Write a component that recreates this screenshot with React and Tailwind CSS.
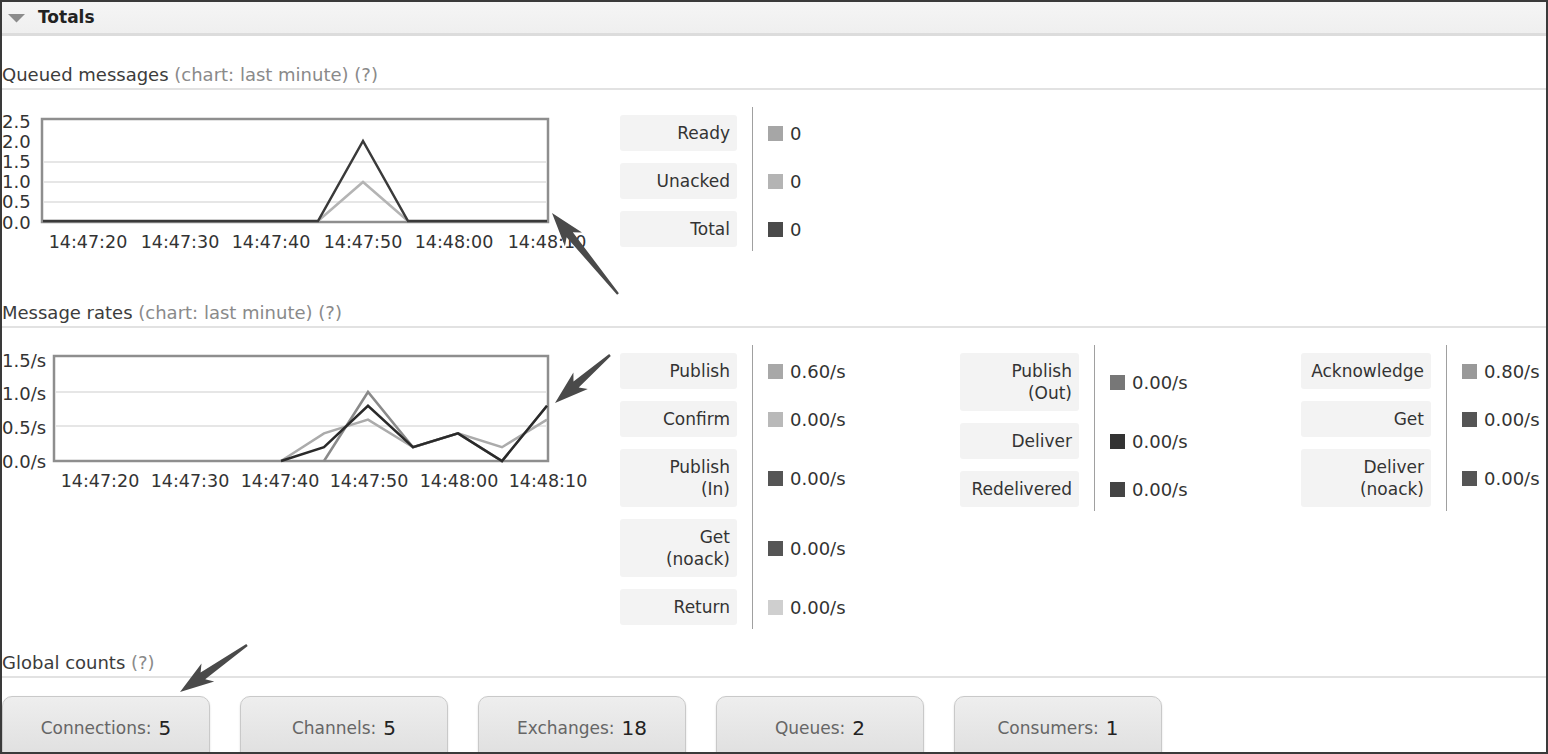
import React from "react";

const FONT = "DejaVu Sans, Verdana, sans-serif";

function arrowPoints(tx, ty, ax, ay) {
  const dx = ax - tx, dy = ay - ty;
  const L = Math.hypot(dx, dy);
  const ux = dx / L, uy = dy / L;
  const px = -uy, py = ux;
  const pt = (d, w) => `${(tx + ux * d + px * w).toFixed(1)},${(ty + uy * d + py * w).toFixed(1)}`;
  return [pt(0, 0), pt(34, 11), pt(28, 4), pt(L, 1.2), pt(L, -1.2), pt(28, -4), pt(34, -11)].join(" ");
}

function Title({ main, sub, className }) {
  return (
    <div className={`pb-[1px] border-b-2 border-[#e2e2e2] text-[18px] leading-[24px] whitespace-nowrap ${className}`}>
      <span className="text-[#3c3c3c]">{main}</span>
      {sub ? <span className="text-[#8a8a8a]"> {sub}</span> : null}
    </div>
  );
}

function LegendRow({ label, color, value }) {
  const lines = Array.isArray(label) ? label : [label];
  return (
    <>
      <div className="pt-[8px] pb-[4px] pr-[15px]">
        <div className="bg-[#f3f3f3] rounded-[3px] px-[7px] py-[7px] leading-[22px] text-right text-[17px] text-[#333]">
          {lines.map((l, i) => (
            <div key={i}>{l}</div>
          ))}
        </div>
      </div>
      <div className="border-l border-[#a0a0a0] pl-[15px] pt-[9px] pb-[4px] flex items-center whitespace-nowrap">
        <span className="inline-block w-[15px] h-[15px]" style={{ backgroundColor: color }} />
        <span className="ml-[7px] text-[18px] leading-[22px] text-[#333]">{value}</span>
      </div>
    </>
  );
}

function Chart1() {
  const ticks = [
    ["14:47:20", 88],
    ["14:47:30", 180],
    ["14:47:40", 271],
    ["14:47:50", 363],
    ["14:48:00", 454],
    ["14:48:10", 547],
  ];
  const ylabels = [
    ["2.5", 123],
    ["2.0", 143],
    ["1.5", 163],
    ["1.0", 183],
    ["0.5", 203],
    ["0.0", 224],
  ];
  return (
    <svg width="600" height="211" viewBox="2 91 600 211" className="shrink-0" style={{ fontFamily: FONT }}>
      <rect x="42" y="120" width="506" height="103" fill="#fff" stroke="#8e8e8e" strokeWidth="2.5" />
      {[163, 183, 203].map((y) => (
        <line key={y} x1="44" x2="546" y1={y} y2={y} stroke="#e6e6e6" strokeWidth="2" />
      ))}
      <polyline points="318,222 363,183 408,222" fill="none" stroke="#b4b4b4" strokeWidth="2.5" />
      <polyline points="43,222 318,222 363,142 408,222 547,222" fill="none" stroke="#3a3a3a" strokeWidth="2.5" strokeLinejoin="miter" />
      {ylabels.map(([t, y]) => (
        <text key={t} x="2" y={y + 6} fontSize="18" fill="#333">{t}</text>
      ))}
      {ticks.map(([t, x]) => (
        <text key={t} x={x} y="249" fontSize="17.5" fill="#333" textAnchor="middle">{t}</text>
      ))}
    </svg>
  );
}

function Chart2() {
  const xs = [281, 324, 368, 413, 458, 502, 547];
  const y = (v) => 462 - v * 69;
  const pts = (vals, from = 0) =>
    vals.map((v, i) => [v, i]).filter(([, i]) => i >= from).map(([v, i]) => `${xs[i]},${y(v).toFixed(1)}`).join(" ");
  const ticks = [
    ["14:47:20", 100],
    ["14:47:30", 190],
    ["14:47:40", 280],
    ["14:47:50", 369],
    ["14:48:00", 459],
    ["14:48:10", 548],
  ];
  const ylabels = [
    ["1.5/s", 362],
    ["1.0/s", 395],
    ["0.5/s", 429],
    ["0.0/s", 463],
  ];
  return (
    <svg width="600" height="323" viewBox="2 329 600 323" className="shrink-0" style={{ fontFamily: FONT }}>
      <rect x="54" y="357" width="494" height="105" fill="#fff" stroke="#8e8e8e" strokeWidth="2.5" />
      {[393, 427].map((yy) => (
        <line key={yy} x1="56" x2="546" y1={yy} y2={yy} stroke="#e6e6e6" strokeWidth="2" />
      ))}
      <polyline points={pts([0, 0.4, 0.6, 0.2, 0.4, 0.2, 0.6])} fill="none" stroke="#ababab" strokeWidth="2.5" />
      <polyline points={pts([0, 0, 1.0, 0.2, 0.4, 0, 0.8], 1)} fill="none" stroke="#8a8a8a" strokeWidth="2.5" />
      <polyline points={pts([0, 0.2, 0.8, 0.2, 0.4, 0, 0.8])} fill="none" stroke="#2a2a2a" strokeWidth="2.5" />
      {ylabels.map(([t, yy]) => (
        <text key={t} x="2" y={yy + 6} fontSize="18" fill="#333">{t}</text>
      ))}
      {ticks.map(([t, x]) => (
        <text key={t} x={x} y="488" fontSize="17.5" fill="#333" textAnchor="middle">{t}</text>
      ))}
    </svg>
  );
}

function CountButton({ label, value }) {
  return (
    <div className="w-[208px] h-[72px] shrink-0 rounded-[10px] border border-[#c9c9c9] bg-gradient-to-b from-[#eeeeee] to-[#dddddd] shadow-[0_1px_2px_rgba(0,0,0,0.15)] flex justify-center pt-[19px] whitespace-nowrap">
      <span className="text-[17px] leading-[24px] text-[#666]">{label}</span>
      <span className="ml-[7px] text-[20px] leading-[24px] text-[#222]">{value}</span>
    </div>
  );
}

export default function App() {
  return (
    <div
      className="relative w-[1548px] h-[754px] overflow-hidden bg-white border-2 border-[#3a3a3a] font-['DejaVu_Sans',Verdana,sans-serif] text-[#333]"
    >
      {/* Header */}
      <div className="h-[34px] bg-gradient-to-b from-[#f5f5f5] to-[#efefef] border-b-[3px] border-[#dcdcdc] flex items-center pl-[6px] pt-[1px]">
        <svg width="17" height="9" viewBox="0 0 17 9">
          <polygon points="0,0 17,0 8.5,8.5" fill="#8c8c8c" />
        </svg>
        <span className="ml-[13px] text-[17px] font-bold text-[#222]">Totals</span>
      </div>

      {/* Queued messages */}
      <Title main="Queued messages" sub="(chart: last minute) (?)" className="mt-[27px]" />
      <div className="flex items-start h-[211px]">
        <Chart1 />
        <div className="ml-[18px] mt-[17px] grid grid-cols-[132px_208px]">
          <LegendRow label="Ready" color="#a6a6a6" value="0" />
          <LegendRow label="Unacked" color="#b4b4b4" value="0" />
          <LegendRow label="Total" color="#4a4a4a" value="0" />
        </div>
      </div>

      {/* Message rates */}
      <Title main="Message rates" sub="(chart: last minute) (?)" />
      <div className="flex items-start h-[323px]">
        <Chart2 />
        <div className="ml-[18px] mt-[17px] flex items-start">
          <div className="grid grid-cols-[132px_208px]">
            <LegendRow label="Publish" color="#a8a8a8" value="0.60/s" />
            <LegendRow label="Confirm" color="#b9b9b9" value="0.00/s" />
            <LegendRow label={["Publish", "(In)"]} color="#555555" value="0.00/s" />
            <LegendRow label={["Get", "(noack)"]} color="#555555" value="0.00/s" />
            <LegendRow label="Return" color="#cfcfcf" value="0.00/s" />
          </div>
          <div className="grid grid-cols-[134px_207px]">
            <LegendRow label={["Publish", "(Out)"]} color="#777777" value="0.00/s" />
            <LegendRow label="Deliver" color="#333333" value="0.00/s" />
            <LegendRow label="Redelivered" color="#444444" value="0.00/s" />
          </div>
          <div className="grid grid-cols-[145px_120px]">
            <LegendRow label="Acknowledge" color="#999999" value="0.80/s" />
            <LegendRow label="Get" color="#555555" value="0.00/s" />
            <LegendRow label={["Deliver", "(noack)"]} color="#555555" value="0.00/s" />
          </div>
        </div>
      </div>

      {/* Global counts */}
      <Title main="Global counts" sub="(?)" />
      <div className="mt-[18px] flex gap-[30px]">
        <CountButton label="Connections:" value="5" />
        <CountButton label="Channels:" value="5" />
        <CountButton label="Exchanges:" value="18" />
        <CountButton label="Queues:" value="2" />
        <CountButton label="Consumers:" value="1" />
      </div>

      {/* Annotation arrows */}
      <svg
        className="absolute inset-0 pointer-events-none"
        width="1544"
        height="750"
        viewBox="2 2 1544 750"
      >
        <polygon points={arrowPoints(552, 213, 618, 294)} fill="#4a4a4a" />
        <polygon points={arrowPoints(555, 403, 610, 355)} fill="#4a4a4a" />
        <polygon points={arrowPoints(180, 692, 247, 645)} fill="#4a4a4a" />
      </svg>
    </div>
  );
}
